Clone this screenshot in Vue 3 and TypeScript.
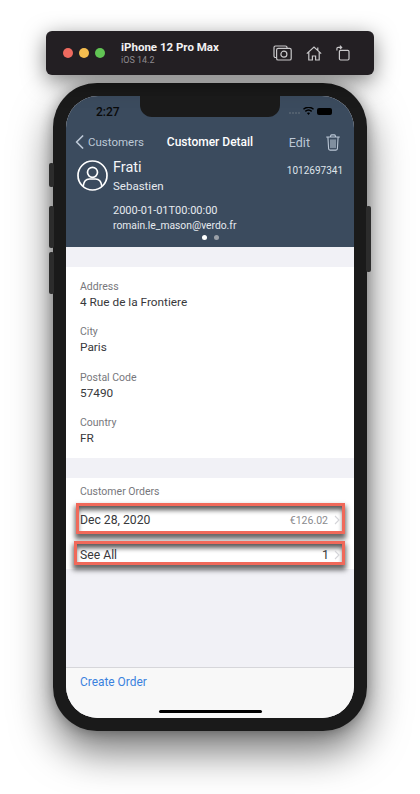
<script setup lang="ts">
const fields = [
  { label: 'Address', value: '4 Rue de la Frontiere' },
  { label: 'City', value: 'Paris' },
  { label: 'Postal Code', value: '57490' },
  { label: 'Country', value: 'FR' },
]
</script>

<template>
  <div class="page">
    <div class="sim-bar">
      <div class="lights">
        <span class="light red"></span>
        <span class="light yellow"></span>
        <span class="light green"></span>
      </div>
      <div class="sim-title">
        <div class="sim-name">iPhone 12 Pro Max</div>
        <div class="sim-os">iOS 14.2</div>
      </div>
      <div class="sim-icons">
        <svg width="19" height="16" viewBox="0 0 19 16" fill="none" stroke="#c9c8ca" stroke-width="1.2">
          <path d="M3.5 12.5H2.5a1.5 1.5 0 0 1-1.5-1.5V2.5A1.5 1.5 0 0 1 2.5 1h10A1.5 1.5 0 0 1 14 2.5V3" />
          <rect x="3.6" y="3.4" width="14.6" height="11.6" rx="1.6" />
          <circle cx="10.9" cy="9.2" r="3" />
        </svg>
        <svg width="16" height="15" viewBox="0 0 16 15" fill="none" stroke="#c9c8ca" stroke-width="1.2">
          <path d="M.8 7.6 8 1l7.2 6.6M2.8 6.2V14h3.6v-4h3.2v4h3.6V6.2M11.8 1.6v2.6" />
        </svg>
        <svg width="14" height="16" viewBox="0 0 14 16" fill="none" stroke="#c9c8ca" stroke-width="1.2">
          <rect x="3.4" y="5.4" width="9.6" height="9.6" rx="1.2" />
          <path d="M.9 5.4V3.6c0-.8.5-1.2 1.2-1.2h3.2M3.9.6 5.7 2.4 3.9 4.2" />
        </svg>
      </div>
    </div>

    <div class="phone">
      <span class="side-btn mute"></span>
      <span class="side-btn vol-up"></span>
      <span class="side-btn vol-down"></span>
      <span class="side-btn power"></span>
      <div class="notch"></div>

      <div class="screen">
        <header class="header">
          <div class="status">
            <span class="time">2:27</span>
            <div class="status-icons">
              <span class="signal"><i></i><i></i><i></i><i></i></span>
              <svg width="11" height="8" viewBox="0 0 11 8">
                <path d="M5.5 8 3.9 6.1a2.4 2.4 0 0 1 3.2 0L5.5 8ZM2.8 4.9l-1-1.1a5.6 5.6 0 0 1 7.4 0l-1 1.1a4.1 4.1 0 0 0-5.4 0ZM.9 2.8 0 1.7a8.2 8.2 0 0 1 11 0l-.9 1.1a6.9 6.9 0 0 0-9.2 0Z" fill="#000" />
              </svg>
              <span class="battery"></span>
            </div>
          </div>

          <nav class="nav">
            <div class="back">
              <svg width="9" height="14" viewBox="0 0 9 14" fill="none" stroke="#bcc8d6" stroke-width="1.7" stroke-linecap="round" stroke-linejoin="round">
                <path d="M7.6 1 1.6 7l6 6" />
              </svg>
              <span>Customers</span>
            </div>
            <div class="nav-title">Customer Detail</div>
            <div class="nav-actions">
              <span>Edit</span>
              <svg width="14" height="17" viewBox="0 0 14 17" fill="none" stroke="#bcc8d6" stroke-width="1.1" stroke-linecap="round">
                <path d="M.6 3h12.8M4.6 3V1.9c0-.6.4-1 1-1h2.8c.6 0 1 .4 1 1V3M1.9 3l.7 11.6c0 .9.6 1.5 1.4 1.5h6c.8 0 1.4-.6 1.4-1.5L12.100 3M5 5.800v7.800M7 5.800v7.800M9 5.800v7.800" />
              </svg>
            </div>
          </nav>

          <div class="profile">
            <svg class="avatar" width="31" height="31" viewBox="0 0 31 31" fill="none" stroke="#fff" stroke-width="1.7">
              <circle cx="15.500" cy="15.500" r="14.500" />
              <circle cx="15.500" cy="12.300" r="5" />
              <path d="M6.200 25.800c.6-4.400 3.200-6.800 6.200-6.800h6.200c3 0 5.600 2.400 6.200 6.800" />
            </svg>
            <div class="names">
              <div class="last-name">Frati</div>
              <div class="first-name">Sebastien</div>
            </div>
            <div class="customer-id">1012697341</div>
          </div>
          <div class="meta">
            <div class="birth">2000-01-01T00:00:00</div>
            <div class="email">romain.le_mason@verdo.fr</div>
          </div>
          <div class="dots">
            <span class="dot on"></span>
            <span class="dot"></span>
          </div>
        </header>

        <section class="info">
          <div v-for="f in fields" :key="f.label" class="field">
            <div class="label">{{ f.label }}</div>
            <div class="value">{{ f.value }}</div>
          </div>
        </section>

        <section class="orders">
          <div class="orders-title">Customer Orders</div>
          <div class="order-row">
            <span class="value">Dec 28, 2020</span>
            <span class="price">€126.02</span>
            <svg class="chev" width="6" height="10" viewBox="0 0 6 10" fill="none" stroke="#d4d4d8" stroke-width="1.100"><path d="m1 1 4 4-4 4" /></svg>
          </div>
          <div class="see-all">
            <span class="value">See All</span>
            <span class="count">1</span>
            <svg class="chev" width="6" height="10" viewBox="0 0 6 10" fill="none" stroke="#d4d4d8" stroke-width="1.100"><path d="m1 1 4 4-4 4" /></svg>
          </div>
        </section>

        <div class="spacer"></div>

        <footer class="footer">
          <span class="create">Create Order</span>
          <span class="home"></span>
        </footer>
      </div>
    </div>
  </div>
</template>

<style>
html,
body {
  margin: 0;
  background: #fff;
}
</style>

<style scoped>
.page {
  width: 420px;
  height: 794px;
  overflow: hidden;
  display: flex;
  flex-direction: column;
  align-items: center;
  padding-top: 31px;
  box-sizing: border-box;
  font-family: Roboto, "Liberation Sans", sans-serif;
  background: #fff;
}
.sim-bar {
  width: 328px;
  height: 44px;
  flex: none;
  box-sizing: border-box;
  padding: 0 24px 0 17px;
  display: flex;
  align-items: center;
  background: #231f23;
  border-radius: 6px;
  box-shadow: 0 6px 22px rgba(0, 0, 0, 0.5);
  position: relative;
  z-index: 1;
}
.lights {
  display: flex;
  gap: 6px;
}
.light {
  width: 10px;
  height: 10px;
  border-radius: 50%;
}
.red { background: #ee6a5f; }
.yellow { background: #f5bd4f; }
.green { background: #61c454; }
.sim-title {
  margin-left: 16px;
}
.sim-name {
  color: #f2f1f2;
  font-size: 11.500px;
  font-weight: 700;
  line-height: 13px;
}
.sim-os {
  color: #8d8a8e;
  font-size: 9px;
  line-height: 11px;
  margin-top: 1px;
}
.sim-icons {
  margin-left: auto;
  display: flex;
  align-items: center;
  gap: 14px;
}
.phone {
  position: relative;
  width: 314px;
  height: 648px;
  flex: none;
  margin-top: 8px;
  box-sizing: border-box;
  padding: 13px;
  background: #1a1a1a;
  border-radius: 44px;
  box-shadow: 0 20px 40px rgba(0, 0, 0, 0.55), 0 0 14px rgba(0, 0, 0, 0.3);
}
.side-btn {
  position: absolute;
  background: #2c2c2c;
  border-radius: 2px;
}
.mute { left: -4px; top: 80px; width: 5px; height: 24px; }
.vol-up { left: -4px; top: 123px; width: 5px; height: 42px; }
.vol-down { left: -4px; top: 169px; width: 5px; height: 42px; }
.power { right: -4px; top: 123px; width: 5px; height: 66px; }
.notch {
  position: absolute;
  left: 87px;
  top: 13px;
  width: 140px;
  height: 21px;
  background: #1a1a1a;
  border-radius: 0 0 12px 12px;
  z-index: 2;
}
.screen {
  width: 288px;
  height: 622px;
  display: flex;
  flex-direction: column;
  overflow: hidden;
  border-radius: 32px;
  background: #f1f1f6;
}
.header {
  height: 151px;
  flex: none;
  background: #3b4b5e;
  box-sizing: border-box;
  color: #fff;
}
.status {
  height: 33px;
  box-sizing: border-box;
  padding: 9px 22px 0 30px;
  display: flex;
  justify-content: space-between;
  align-items: flex-start;
}
.time {
  color: #0a0a0a;
  font-size: 12px;
  font-weight: 500;
  line-height: 14px;
}
.status-icons {
  display: flex;
  align-items: center;
  gap: 3px;
  height: 12px;
}
.signal {
  display: flex;
  gap: 1px;
  align-items: flex-end;
  margin-top: 3px;
}
.signal i {
  width: 2px;
  height: 2px;
  border-radius: 50%;
  background: #5a6675;
}
.battery {
  width: 15px;
  height: 7px;
  background: #000;
  border-radius: 2px;
}
.nav {
  height: 26px;
  display: flex;
  align-items: center;
  position: relative;
  padding: 0 14px 0 9px;
  font-size: 12px;
  color: #bcc8d6;
}
.back {
  display: flex;
  align-items: center;
  gap: 4px;
  font-size: 11.500px;
}
.nav-title {
  position: absolute;
  left: 0;
  right: 0;
  text-align: center;
  color: #fff;
  font-weight: 500;
  pointer-events: none;
}
.nav-actions {
  margin-left: auto;
  display: flex;
  align-items: center;
  gap: 16px;
  font-size: 12.500px;
}
.profile {
  display: flex;
  align-items: flex-start;
  padding: 0 11px;
  height: 37px;
  margin-top: 4px;
}
.avatar {
  margin-top: 1px;
  flex: none;
}
.names {
  margin-left: 5px;
}
.last-name {
  font-size: 14.500px;
  line-height: 18px;
  color: #f4f6f8;
}
.first-name {
  font-size: 11.500px;
  line-height: 19px;
  color: #e6eaef;
}
.customer-id {
  margin-left: auto;
  margin-top: 2px;
  font-size: 10px;
  line-height: 20px;
  color: #dfe4ea;
}
.meta {
  margin-top: 7px;
  padding-left: 47px;
  line-height: 15px;
  color: #e6eaef;
}
.birth {
  font-size: 11px;
}
.email {
  font-size: 10.300px;
}
.dots {
  display: flex;
  justify-content: center;
  gap: 7px;
  margin-top: 2px;
}
.dot {
  width: 5px;
  height: 5px;
  border-radius: 50%;
  background: #9aa0a8;
}
.dot.on {
  background: #fff;
}
.info {
  margin-top: 20px;
  flex: none;
  height: 191px;
  box-sizing: border-box;
  padding: 13px 14px 0;
  background: #fff;
  display: flex;
  flex-direction: column;
  gap: 15.300px;
}
.label {
  color: #77777c;
  font-size: 10.500px;
  line-height: 13px;
}
.value {
  color: #38383b;
  font-size: 11.800px;
  line-height: 16px;
  margin-top: 1px;
}
.orders {
  margin-top: 20px;
  flex: none;
  height: 91px;
  box-sizing: border-box;
  position: relative;
  padding-top: 7px;
  background: #fff;
}
.orders-title {
  padding-left: 14px;
  color: #77777c;
  font-size: 10.500px;
  line-height: 13px;
}
.order-row,
.see-all {
  display: flex;
  align-items: center;
  box-sizing: border-box;
  background: #fff;
  border: 3px solid #f0695a;
  box-shadow: inset 0 5px 5px -1px rgba(0, 0, 0, 0.65), 0 4px 5px 1px rgba(0, 0, 0, 0.6);
}
.order-row {
  width: 269px;
  height: 31px;
  margin: 5px 0 0 10px;
  padding: 3px 2px 0 1px;
}
.see-all {
  width: 271px;
  height: 24px;
  margin: 7px 0 0 8px;
  padding: 3px 2px 0 3px;
}
.order-row .value,
.see-all .value {
  margin-top: 0;
  font-size: 12.200px;
}
.price {
  margin-left: auto;
  margin-right: 6px;
  font-size: 10.500px;
  color: #8a8a8e;
}
.count {
  margin-left: auto;
  margin-right: 5px;
  font-size: 12.500px;
  color: #38383b;
}
.spacer {
  flex: 1;
}
.footer {
  height: 51px;
  flex: none;
  position: relative;
  background: #f8f8f8;
  border-top: 1px solid #d6d6da;
  box-sizing: border-box;
  padding: 7px 14px 0;
}
.create {
  color: #3b82de;
  font-size: 11.900px;
  line-height: 14px;
  display: block;
}
.home {
  position: absolute;
  left: 93px;
  bottom: 5px;
  width: 103px;
  height: 3px;
  border-radius: 2px;
  background: #000;
}
</style>
